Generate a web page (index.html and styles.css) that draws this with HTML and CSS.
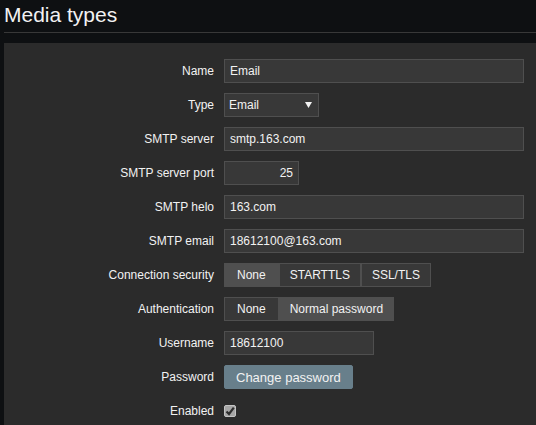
FILE: index.html
```html
<!DOCTYPE html>
<html>
<head>
<meta charset="utf-8">
<title>Media types</title>
<link rel="stylesheet" href="styles.css">
</head>
<body>
<header class="page-header">
  <h1 class="page-title">Media types</h1>
</header>
<main class="panel">
  <form class="form-grid">
    <label class="form-label">Name</label>
    <div class="form-field"><input class="text-input w-300" type="text" value="Email"></div>

    <label class="form-label">Type</label>
    <div class="form-field">
      <div class="select">
        <span class="select-value">Email</span>
        <svg class="select-arrow" width="7" height="6" viewBox="0 0 7 6"><path d="M0 0H7L3.5 6Z" fill="#f2f2f2"/></svg>
      </div>
    </div>

    <label class="form-label">SMTP server</label>
    <div class="form-field"><input class="text-input w-300" type="text" value="smtp.163.com"></div>

    <label class="form-label">SMTP server port</label>
    <div class="form-field"><input class="text-input w-75 align-right" type="text" value="25"></div>

    <label class="form-label">SMTP helo</label>
    <div class="form-field"><input class="text-input w-300" type="text" value="163.com"></div>

    <label class="form-label">SMTP email</label>
    <div class="form-field"><input class="text-input w-300" type="text" value="18612100@163.com"></div>

    <label class="form-label">Connection security</label>
    <div class="form-field">
      <div class="segmented">
        <span class="segment is-selected">None</span>
        <span class="segment">STARTTLS</span>
        <span class="segment">SSL/TLS</span>
      </div>
    </div>

    <label class="form-label">Authentication</label>
    <div class="form-field">
      <div class="segmented">
        <span class="segment">None</span>
        <span class="segment is-selected">Normal password</span>
      </div>
    </div>

    <label class="form-label">Username</label>
    <div class="form-field"><input class="text-input w-150" type="text" value="18612100"></div>

    <label class="form-label">Password</label>
    <div class="form-field"><button type="button" class="btn">Change password</button></div>

    <label class="form-label">Enabled</label>
    <div class="form-field">
      <span class="checkbox">
        <svg width="10" height="10" viewBox="0 0 10 10"><path d="M1.5 5.5L4 8L8.8 1.6" fill="none" stroke="#2e2e2e" stroke-width="2.2"/></svg>
      </span>
    </div>
  </form>
</main>
</body>
</html>
```

FILE: styles.css
```css
html, body {
  margin: 0;
  padding: 0;
}

body {
  background: #0e1012;
  color: #f2f2f2;
  font-family: "Liberation Sans", Arial, sans-serif;
  font-size: 12px;
  width: 536px;
  height: 425px;
  overflow: hidden;
}

.page-header {
  margin-left: 4px;
  padding-top: 3px;
  padding-bottom: 5px;
  border-bottom: 1px solid #383838;
}

.page-title {
  margin: 0;
  font-size: 21px;
  font-weight: normal;
  line-height: 24px;
  color: #f2f2f2;
}

.panel {
  box-sizing: border-box;
  height: 382px;
  margin: 10px 0 0 4px;
  background: #2b2b2b;
  padding: 16px 0 0 0;
}

.form-grid {
  display: grid;
  grid-template-columns: 210px 1fr;
  column-gap: 10px;
  row-gap: 10px;
  grid-auto-rows: 24px;
}

.form-label {
  display: flex;
  align-items: center;
  justify-content: flex-end;
  white-space: nowrap;
  color: #f2f2f2;
}

.form-field {
  display: flex;
  align-items: center;
}

.text-input {
  box-sizing: border-box;
  height: 24px;
  margin: 0;
  padding: 0 5px;
  background: #383838;
  border: 1px solid #4f4f4f;
  color: #f2f2f2;
  font-family: "Liberation Sans", Arial, sans-serif;
  font-size: 12px;
  outline: none;
}

.w-300 { width: 300px; }
.w-150 { width: 150px; }
.w-75 { width: 75px; }
.align-right { text-align: right; }

.select {
  box-sizing: border-box;
  width: 95px;
  height: 24px;
  padding: 0 6px 0 4px;
  display: flex;
  align-items: center;
  justify-content: space-between;
  background: #383838;
  border: 1px solid #4f4f4f;
}

.select-arrow {
  display: block;
}

.segmented {
  display: flex;
  height: 24px;
}

.segment {
  box-sizing: border-box;
  height: 24px;
  display: flex;
  align-items: center;
  padding: 0 10px;
  background: #383838;
  border: 1px solid #4f4f4f;
  color: #f2f2f2;
  white-space: nowrap;
}

.segment:first-child {
  padding: 0 12px;
}

.segment.is-selected {
  background: #4f4f4f;
}

.btn {
  box-sizing: border-box;
  height: 24px;
  margin: 0;
  padding: 0 11px;
  background: #687f8b;
  border: 1px solid #687f8b;
  border-radius: 2px;
  color: #f2f2f2;
  font-family: "Liberation Sans", Arial, sans-serif;
  font-size: 13px;
  cursor: pointer;
}

.checkbox {
  box-sizing: border-box;
  width: 12px;
  height: 12px;
  display: flex;
  align-items: center;
  justify-content: center;
  background: #a6a6a6;
  border: 1px solid #c4c4c4;
  border-radius: 2px;
}
```
